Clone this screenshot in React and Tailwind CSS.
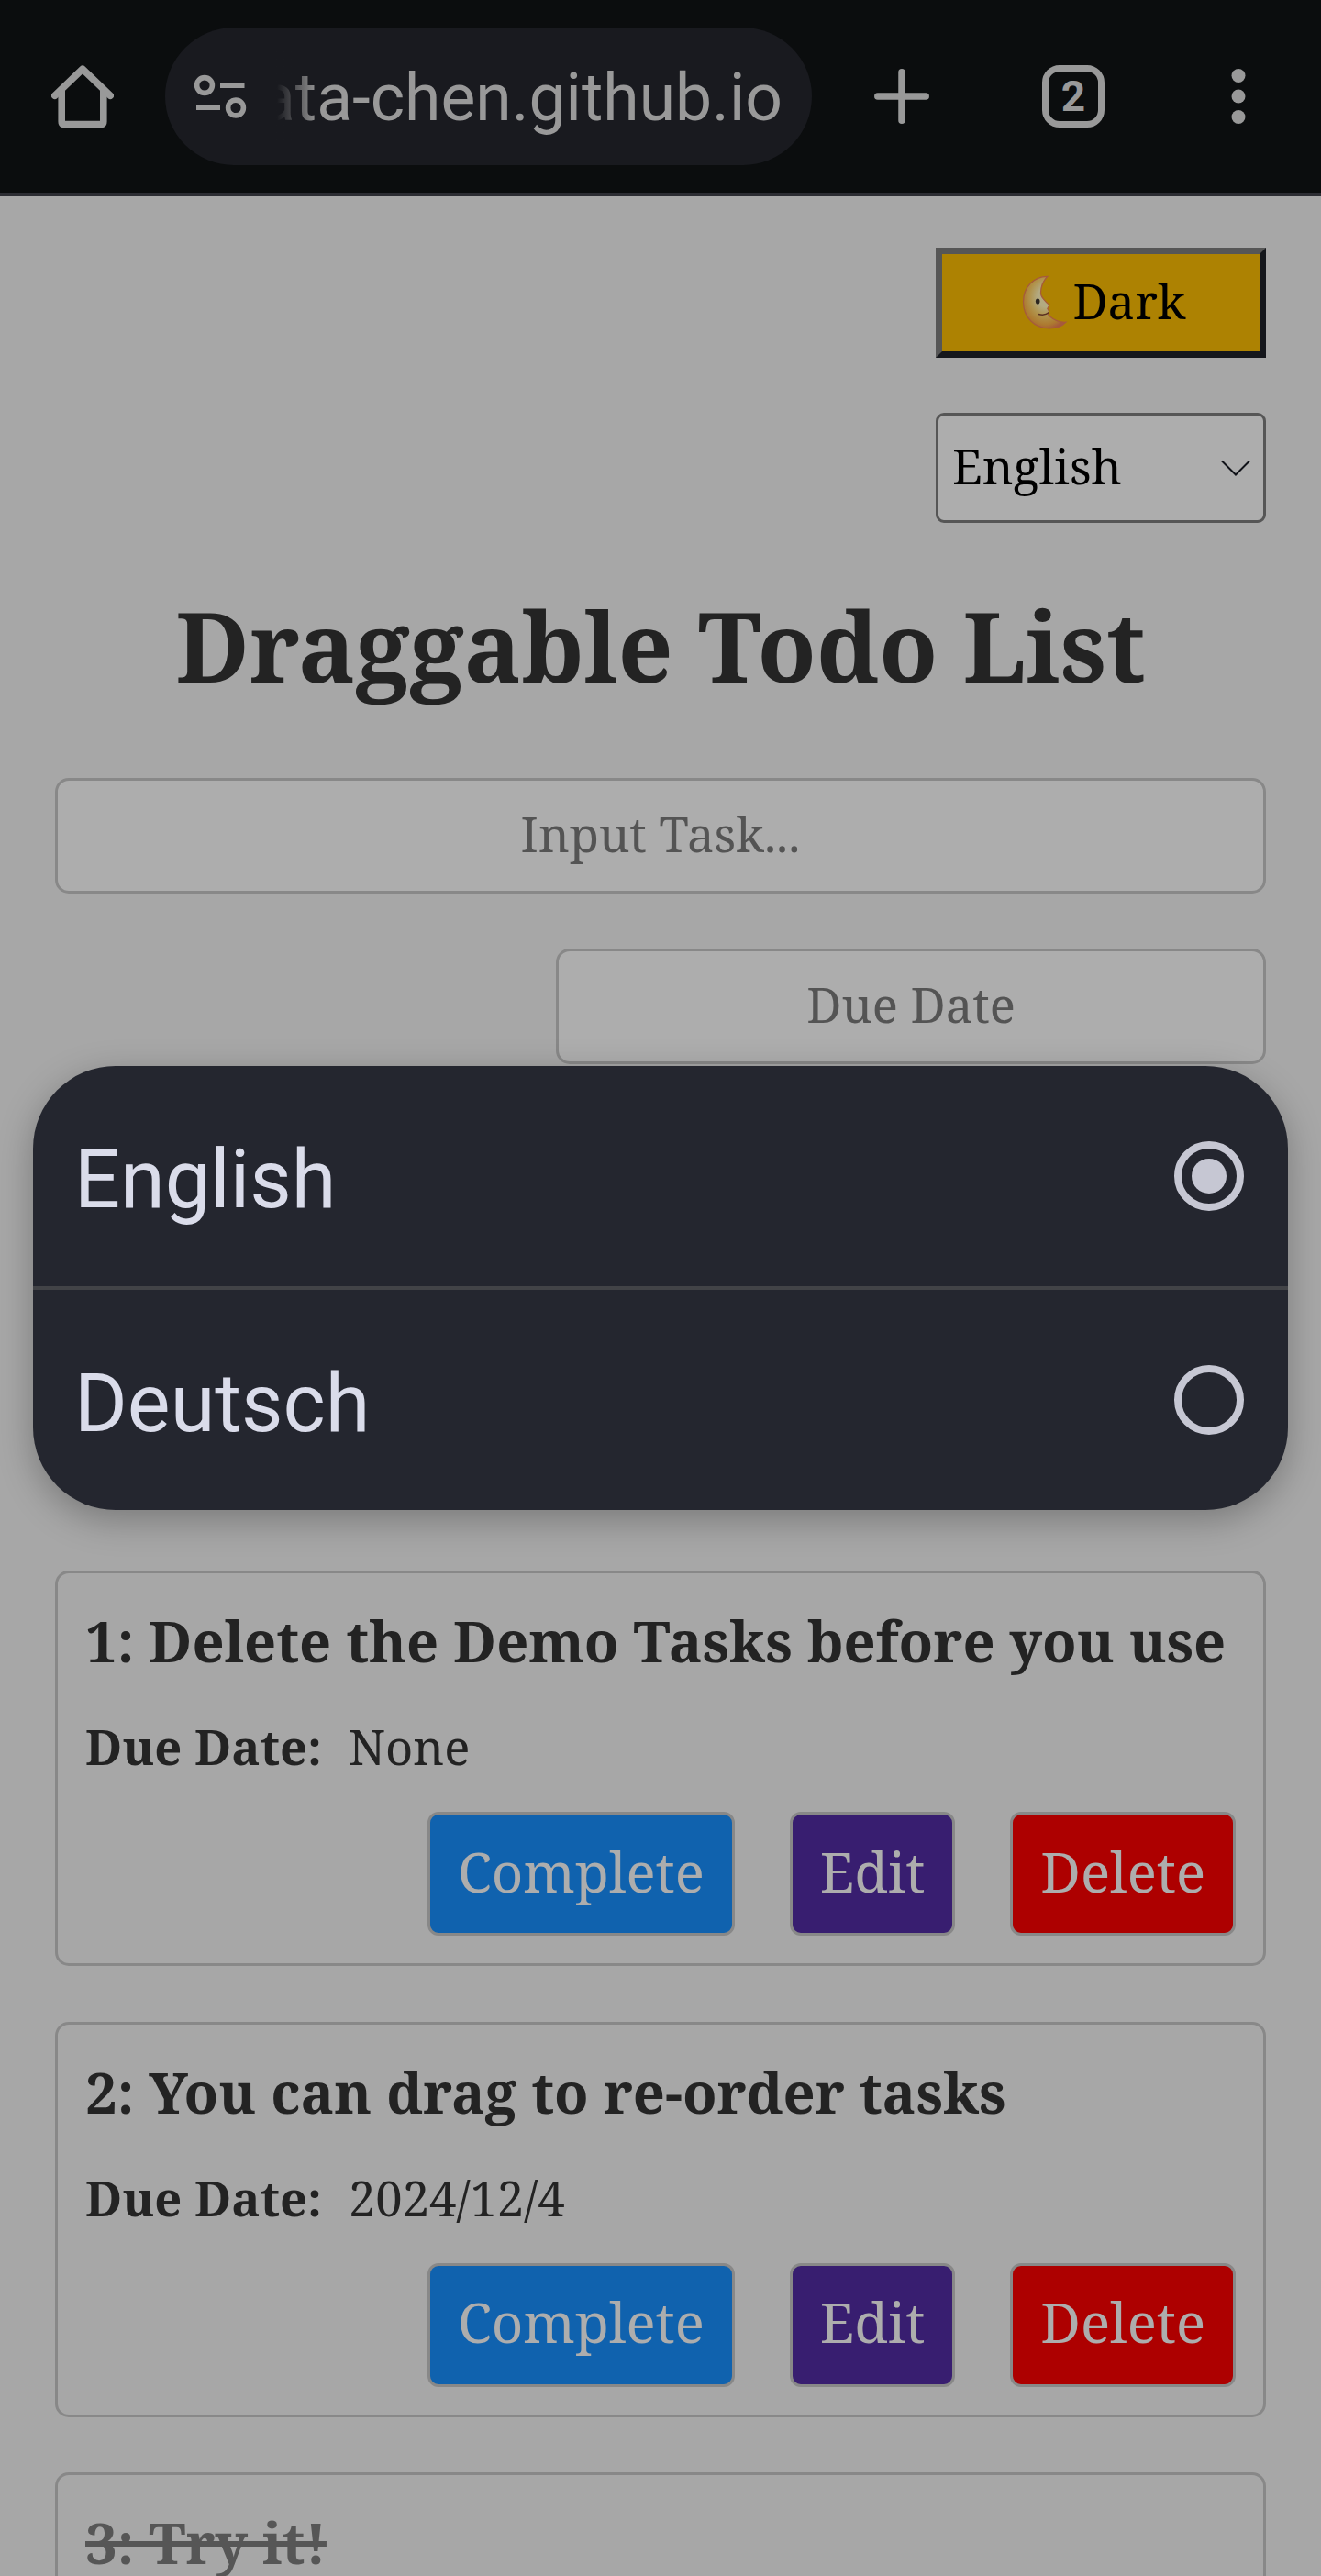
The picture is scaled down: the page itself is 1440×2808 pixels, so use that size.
import React from "react";

function HomeIcon() {
  return (
    <svg className="h-[68px] w-[68px]" viewBox="0 0 68 68" fill="none" stroke="#999" strokeWidth="7.6">
      <path d="M3.8 33.3 34 4.2 64.2 33.3" strokeLinecap="round" strokeLinejoin="round" />
      <path d="M11.2 26V61.5q0 3 3 3H53.8q3 0 3-3V26" />
    </svg>
  );
}

function TuneIcon() {
  return (
    <svg className="h-12 w-[57px] shrink-0" viewBox="0 0 57 48" fill="none" stroke="#999">
      <g strokeWidth="5.6">
        <circle cx="11" cy="12" r="8.4" />
        <circle cx="45" cy="36.5" r="8.4" />
      </g>
      <path d="M28 12H54.5M2 36H28" strokeWidth="6" />
    </svg>
  );
}

function MoonIcon() {
  return (
    <svg className="h-[62px] w-[62px]" viewBox="0 0 62 62" role="img" aria-label="moon">
      <defs>
        <radialGradient id="moon" cx="0.52" cy="0.4" r="0.62">
          <stop offset="0.3" stopColor="#b3aa82" />
          <stop offset="0.6" stopColor="#b0924a" />
          <stop offset="0.85" stopColor="#ad7a30" />
          <stop offset="1" stopColor="#a65a3c" />
        </radialGradient>
      </defs>
      <path
        d="M35 2.3C20 2 8.5 14 8.5 30C8.5 47 20.5 59 37 59C44 59 51 56.5 55 52.2C49 52.5 42 50 37.5 46L35.5 43.8L36.5 40.2L34.8 37.5L37 33.5C33 30.5 27 24 27.5 20C27.8 12 30 7 35 2.3Z"
        fill="url(#moon)"
        stroke="#a65a3c"
        strokeWidth="1.2"
      />
      <ellipse cx="24.2" cy="29.5" rx="2.3" ry="3.1" fill="#2c2620" />
      <path d="M25 43.5Q32 45.5 36.5 41.5" stroke="#5a3020" strokeWidth="1.5" fill="none" />
    </svg>
  );
}

function BrowserBar() {
  return (
    <header className="flex h-[214px] items-center border-b-4 border-[#2c2d33] bg-[#0b0d0e] pl-14">
      <HomeIcon />
      <div className="ml-14 flex h-[150px] w-[705px] items-center rounded-full bg-[#191a1f] pl-8">
        <TuneIcon />
        <div className="relative ml-7 flex h-[100px] w-[556px] items-center justify-end overflow-hidden pt-[3px]">
          <span className="text-[71.4px] leading-none whitespace-nowrap text-[#999]">ata-chen.github.io</span>
          <span className="absolute inset-y-0 left-0 w-[50px] bg-linear-to-r from-[#191a1f] from-10% to-transparent" />
        </div>
      </div>
      <svg className="ml-[68px] h-[60px] w-[60px]" viewBox="0 0 60 60" stroke="#999" strokeWidth="7.5" strokeLinecap="round">
        <path d="M30 3.8V56.2M3.8 30H56.2" />
      </svg>
      <div className="ml-[123px] flex h-[68px] w-[68px] items-center justify-center rounded-[19px] border-[7.5px] border-[#999] text-[46px] leading-none font-bold text-[#999]">
        2
      </div>
      <svg className="ml-[138px] h-[62px] w-4" viewBox="0 0 16 62" fill="#999">
        <circle cx="8" cy="8.5" r="7.5" />
        <circle cx="8" cy="31" r="7.5" />
        <circle cx="8" cy="53.5" r="7.5" />
      </svg>
    </header>
  );
}

function ActionButton({ label, className }) {
  return (
    <button
      className={
        "flex h-[135px] items-center justify-center rounded-[12px] border-[3px] border-[#888] px-[30px] pb-[6px] text-[60px] leading-none text-[#adadad] " +
        className
      }
    >
      {label}
    </button>
  );
}

function TaskCard({ title, due, done }) {
  return (
    <li className="h-[431px] shrink-0 rounded-[15px] border-[3px] border-[#888] px-[30px] pt-[42px]">
      <h2
        className={
          "text-[61.4px] leading-[62px] font-bold whitespace-nowrap " +
          (done ? "text-[#565656] line-through" : "")
        }
      >
        {title}
      </h2>
      {!done && (
        <>
          <p className="mt-[59px] flex text-[52.5px] leading-[52px]">
            <b>Due Date:</b>
            <span className="ml-[29px]">{due}</span>
          </p>
          <div className="mt-[45px] flex justify-end gap-[60px]">
            <ActionButton label="Complete" className="bg-[#1062ae]" />
            <ActionButton label="Edit" className="bg-[#381e70]" />
            <ActionButton label="Delete" className="bg-[#ad0000]" />
          </div>
        </>
      )}
    </li>
  );
}

function Option({ label, selected }) {
  return (
    <div className="flex h-[240px] items-center justify-between pr-12 pl-[45px]">
      <span className="pt-2 text-[88.2px] leading-none text-[#dadcea]">{label}</span>
      <span className="flex h-[76px] w-[76px] items-center justify-center rounded-full border-8 border-[#c6c7d3]">
        {selected && <span className="h-[38px] w-[38px] rounded-full bg-[#c6c7d3]" />}
      </span>
    </div>
  );
}

export default function App() {
  return (
    <div className="relative h-[2808px] w-[1440px] overflow-hidden bg-[#a7a7a7] font-['Roboto',sans-serif]">
      <BrowserBar />
      <main className="flex flex-col px-[60px] pt-14 font-['Noto_Serif',serif] text-[#232323]">
        <button className="flex h-[120px] w-[360px] items-center justify-center self-end border-[7px] border-t-[#565656] border-r-[#15171c] border-b-[#15171c] border-l-[#565656] bg-[#ad8202] text-[52.5px] leading-none text-black">
          <MoonIcon />
          <span className="pb-[3px]">Dark</span>
        </button>
        <div className="mt-[60px] flex h-[120px] w-[360px] items-center justify-between self-end rounded-[9px] border-[3px] border-[#565656] bg-[#adadad] pr-[14px] pl-[15px] text-[52.5px] leading-none text-black">
          <span className="pb-[4px]">English</span>
          <svg className="h-[18px] w-[32px]" viewBox="0 0 32 18" fill="none" stroke="#101218" strokeWidth="2">
            <path d="M1 1.5 16 16.5 31 1.5" />
          </svg>
        </div>
        <h1 className="mt-[82px] text-center text-[105px] leading-[104px] font-bold">Draggable Todo List</h1>
        <div className="mt-[92px] flex h-[126px] items-center justify-center rounded-[15px] border-[3px] border-[#888] bg-[#adadad] pb-[3px] text-[52.5px] text-[#545454]">
          Input Task...
        </div>
        <div className="mt-[60px] flex h-[126px] w-[774px] items-center justify-center self-end rounded-[15px] border-[3px] border-[#888] bg-[#adadad] pb-[3px] text-[52.5px] text-[#545454]">
          Due Date
        </div>
        <ul className="mt-[552px] flex flex-col gap-[60.5px]">
          <TaskCard title="1: Delete the Demo Tasks before you use" due="None" />
          <TaskCard title="2: You can drag to re-order tasks" due="2024/12/4" />
          <TaskCard title="3: Try it!" done />
        </ul>
      </main>
      <div className="absolute top-[1162px] left-9 w-[1368px] rounded-[90px] bg-[#24262f] shadow-[0_11px_38px_rgba(0,0,0,0.27)]">
        <Option label="English" selected />
        <div className="h-1 bg-[#424347]" />
        <Option label="Deutsch" />
      </div>
    </div>
  );
}
